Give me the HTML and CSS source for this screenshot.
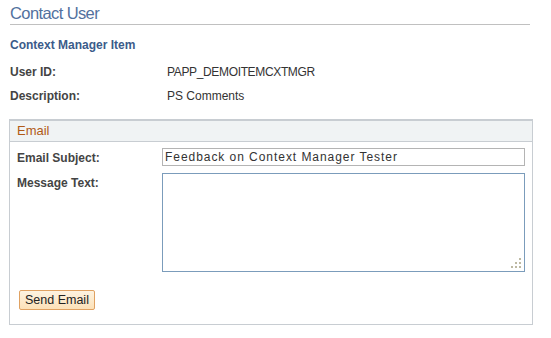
FILE: index.html
```html
<!DOCTYPE html>
<html>
<head>
<meta charset="utf-8">
<link rel="stylesheet" href="styles.css">
</head>
<body>
<div class="page">
  <h1 class="title">Contact User</h1>
  <h2 class="subhead">Context Manager Item</h2>
  <div class="info">
    <div class="info-row"><span class="lbl">User ID:</span><span class="val val-id">PAPP_DEMOITEMCXTMGR</span></div>
    <div class="info-row"><span class="lbl">Description:</span><span class="val">PS Comments</span></div>
  </div>
  <div class="group">
    <div class="group-head">Email</div>
    <div class="group-body">
      <div class="form-row">
        <label class="lbl">Email Subject:</label>
        <div class="input">Feedback on Context Manager Tester</div>
      </div>
      <div class="form-row">
        <label class="lbl">Message Text:</label>
        <div class="textarea">
          <svg class="grip" width="10" height="10" viewBox="0 0 10 10">
            <rect x="8" y="0" width="2" height="2"/>
            <rect x="4" y="4" width="2" height="2"/>
            <rect x="8" y="4" width="2" height="2"/>
            <rect x="0" y="8" width="2" height="2"/>
            <rect x="4" y="8" width="2" height="2"/>
            <rect x="8" y="8" width="2" height="2"/>
          </svg>
        </div>
      </div>
      <div class="actions">
        <button class="btn">Send Email</button>
      </div>
    </div>
  </div>
</div>
</body>
</html>
```
FILE: styles.css
```css
html, body {
  margin: 0;
  padding: 0;
  background: #ffffff;
}
body {
  font-family: "Liberation Sans", Arial, sans-serif;
  font-size: 12px;
  color: #333333;
}
.page {
  width: 524px;
  padding: 0 0 0 10px;
}
.title {
  margin: 0;
  font-weight: normal;
  font-size: 16.5px;
  letter-spacing: -0.6px;
  line-height: 18px;
  padding: 4px 0 2px 0;
  color: #52719e;
  border-bottom: 1px solid #c0c0c0;
  width: 520px;
}
.subhead {
  margin: 14px 0 0 0;
  font-size: 12px;
  line-height: 13px;
  font-weight: bold;
  color: #3b5b8a;
}
.info {
  margin-top: 13px;
  display: flex;
  flex-direction: column;
  gap: 10px;
}
.info-row {
  display: grid;
  grid-template-columns: 157px 1fr;
  line-height: 14px;
}
.lbl {
  font-weight: bold;
  color: #444444;
}
.val {
  color: #333333;
}
.val-id {
  letter-spacing: -0.35px;
}
.group {
  margin: 16px 0 0 -1px;
  width: 522px;
  border: 1px solid #c8cdd2;
  border-top-width: 2px;
}
.group-head {
  background: #f0f3f4;
  border-bottom: 1px solid #c8cdd2;
  color: #b05a17;
  font-size: 13px;
  line-height: 20px;
  padding-left: 7px;
}
.group-body {
  padding: 6px 0 14px 7px;
}
.form-row {
  display: grid;
  grid-template-columns: 145px 1fr;
  align-items: start;
}
.form-row + .form-row {
  margin-top: 7px;
}
.form-row .lbl {
  padding-top: 3px;
  line-height: 14px;
}
.input {
  width: 359px;
  height: 16px;
  border: 1px solid #b4b4b4;
  line-height: 16px;
  padding-left: 2px;
  color: #333333;
  letter-spacing: 0.95px;
  box-sizing: content-box;
  white-space: nowrap;
}
.textarea {
  position: relative;
  width: 361px;
  height: 97px;
  border: 1px solid #7b9cbb;
}
.grip {
  position: absolute;
  right: 3px;
  bottom: 3px;
  fill: #bdb9a3;
}
.actions {
  margin-top: 18px;
  padding-left: 2px;
}
.btn {
  font-family: "Liberation Sans", Arial, sans-serif;
  font-size: 12.5px;
  color: #222222;
  height: 20px;
  padding: 0 5px;
  border: 1px solid #e0a262;
  border-radius: 2px;
  background: linear-gradient(#fdf3e1, #fce1b8);
  line-height: 18px;
}
```
